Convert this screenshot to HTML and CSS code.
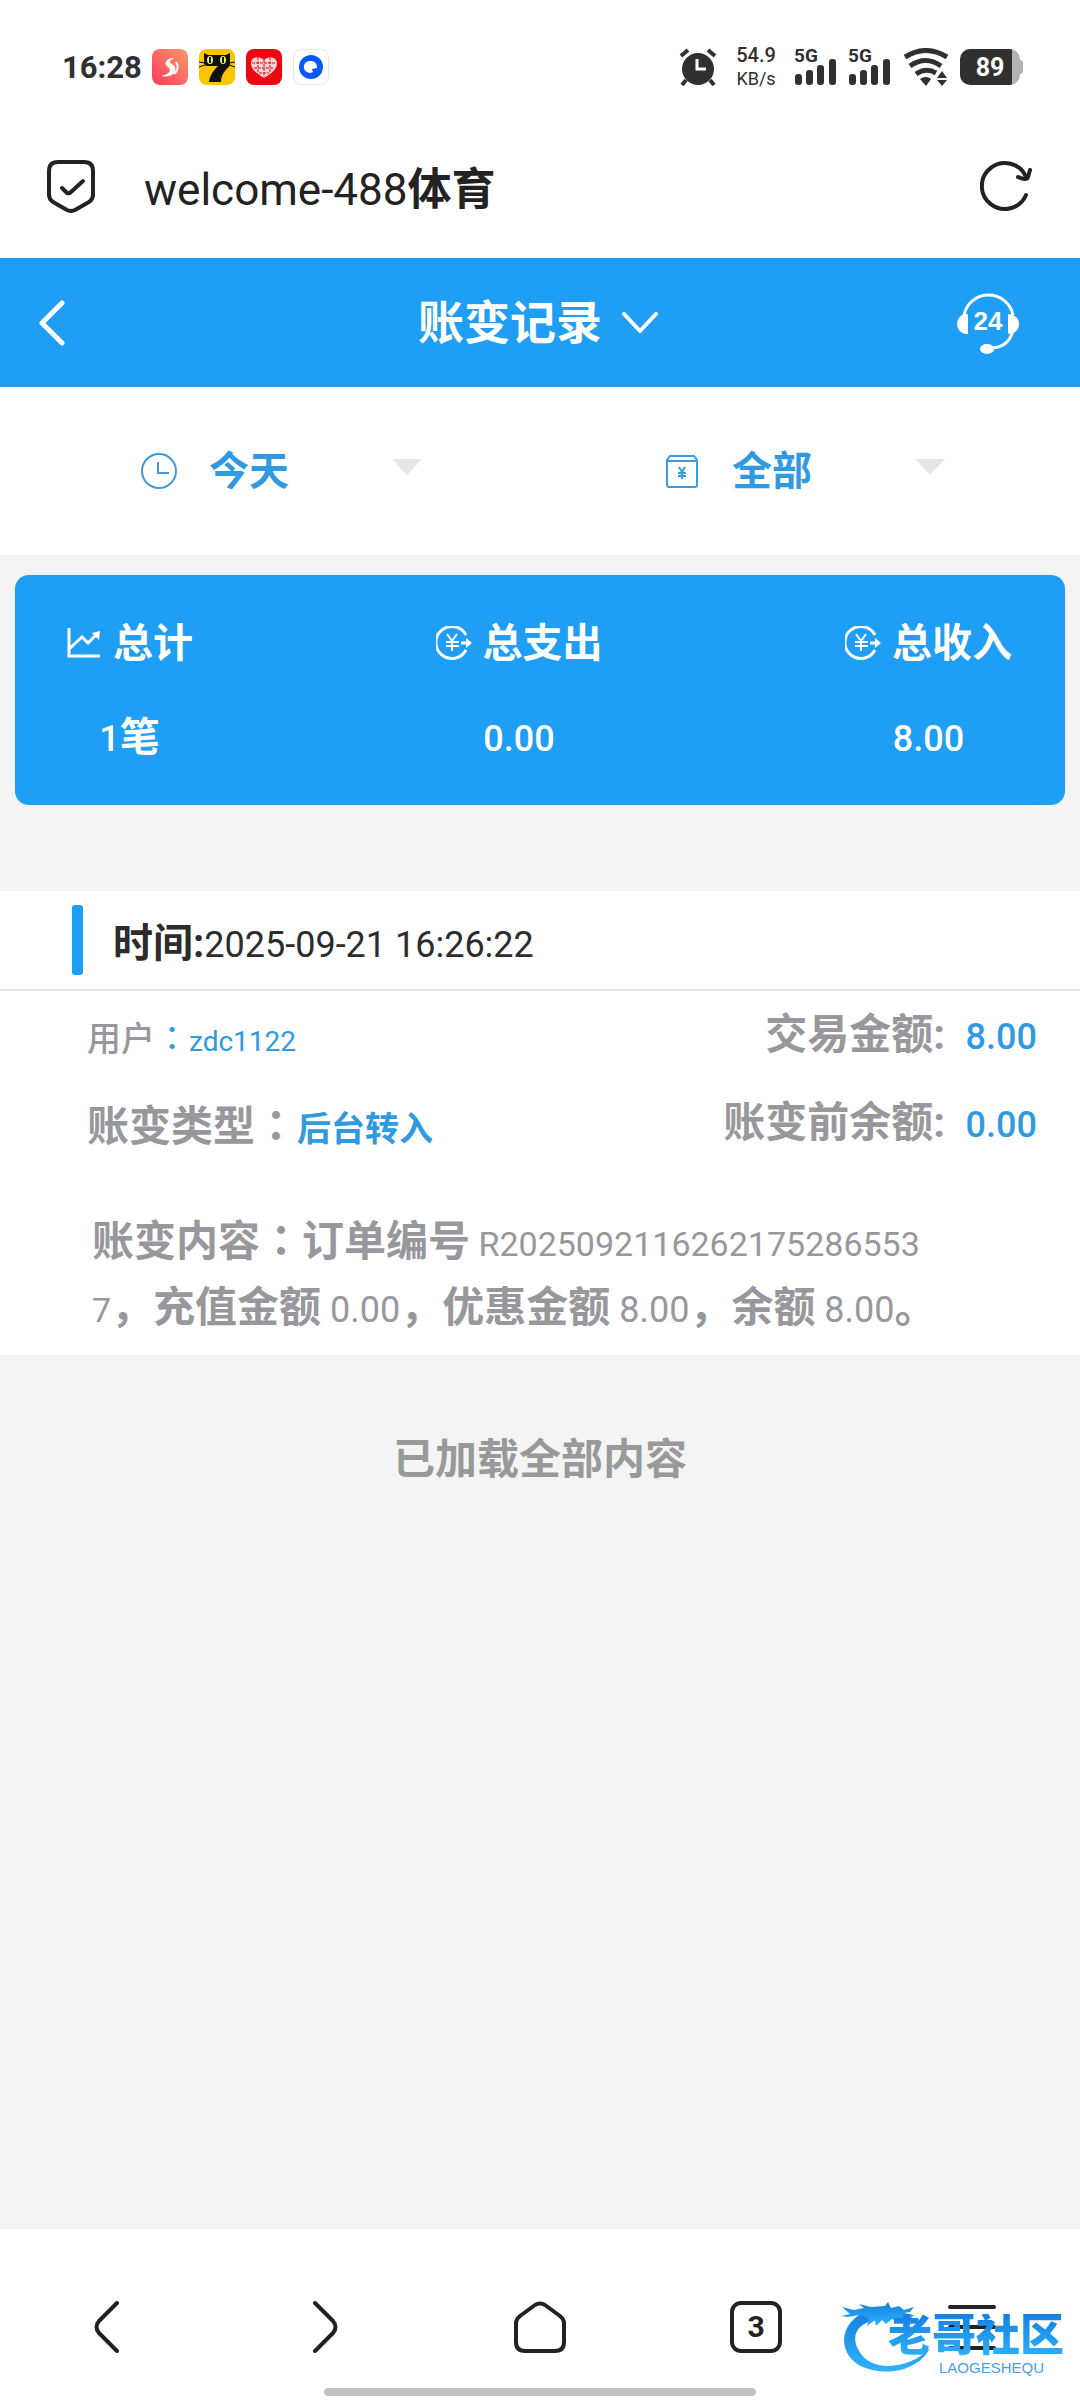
FILE: index.html
```html
<!doctype html>
<html lang="zh-CN">
  <head>
    <meta charset="UTF-8" />
    <meta name="viewport" content="width=device-width, initial-scale=1.0" />
    <title>账变记录</title>
    <link rel="stylesheet" href="styles.css" />
  </head>
  <body>
    <div class="status-bar">
      <div class="status-left">
        <span class="clock">16:28</span>
        <svg class="app-icon" viewBox="0 0 36 36">
          <defs>
            <linearGradient id="appRed" x1="1" y1="0" x2="0" y2="1">
              <stop offset="0" stop-color="#fb9a6a" />
              <stop offset="1" stop-color="#fb3a5c" />
            </linearGradient>
          </defs>
          <rect width="36" height="36" rx="8" fill="url(#appRed)" />
          <path d="M22 9c-8 0-11 6-6 9 4 3 2 7-7 9 10 2 16-3 14-9-1-3-5-3-5-5s2-3 4-4z" fill="#fff" />
          <path d="M24 13c3 4 2 9-2 12" fill="none" stroke="#fff" stroke-width="2" />
        </svg>
        <svg class="app-icon" viewBox="0 0 36 36">
          <rect width="36" height="36" rx="8" fill="#fdc400" />
          <path d="M5 4l4 2h18l4-2v10c0 4-3 5-5 8-3 4-4 7-4 11H10c1-7 4-11 9-16H9c-3 0-4-2-4-5z" fill="#111" />
          <ellipse cx="11" cy="11" rx="3" ry="4" fill="#e8f36a" />
          <ellipse cx="24" cy="11" rx="3" ry="4" fill="#e8f36a" />
          <path d="M11 8v6M24 8v6" stroke="#111" stroke-width="2" />
          <path d="M0 13l6 1M0 18l6-2M36 13l-6 1M36 18l-6-2" stroke="#111" />
        </svg>
        <svg class="app-icon" viewBox="0 0 36 36">
          <rect width="36" height="36" rx="8" fill="#ea0710" />
          <path d="M18 29C10 24 5 20 5 14c0-6 8-8 13-3 5-5 13-3 13 3 0 6-5 10-13 15z" fill="#fbd5d5" />
          <path d="M6 14h24M8 19h20M13 24h10M12 8v15M18 11v17M24 8v15" stroke="#ea0710" stroke-dasharray="3 1" />
        </svg>
        <svg class="app-icon" viewBox="0 0 36 36">
          <rect x=".5" y=".5" width="35" height="35" rx="8" fill="#fff" stroke="#e6e6e6" />
          <circle cx="18" cy="18" r="12" fill="#0b57f7" />
          <path d="M18 12a6 6 0 1 0 2 11l-1-3 5-1a6 6 0 0 0-6-7z" fill="#fff" />
        </svg>
      </div>
      <div class="status-right">
        <svg class="alarm" viewBox="0 0 38 38" fill="none" stroke="#303030" stroke-width="4">
          <circle cx="19" cy="21" r="16" fill="#303030" stroke="none" />
          <path d="M2 8l7-6M36 8l-7-6M7 32l-4 5M31 32l4 5" />
          <path d="M18 11v10h9" stroke="#fff" stroke-width="3" />
        </svg>
        <div class="speed"><b>54.9</b><span>KB/s</span></div>
        <div class="signal">
          <b>5G</b>
          <svg viewBox="0 0 42 26" fill="#303030">
            <rect y="15" width="7" height="11" rx="3" />
            <rect x="11" y="11" width="7" height="15" rx="3" />
            <rect x="22" y="6" width="7" height="20" rx="3" />
            <rect x="34" width="7" height="26" rx="3" />
          </svg>
        </div>
        <div class="signal">
          <b>5G</b>
          <svg viewBox="0 0 42 26" fill="#303030">
            <rect y="15" width="7" height="11" rx="3" />
            <rect x="11" y="11" width="7" height="15" rx="3" />
            <rect x="22" y="6" width="7" height="20" rx="3" />
            <rect x="34" width="7" height="26" rx="3" />
          </svg>
        </div>
        <svg class="wifi" viewBox="0 0 46 38" fill="none" stroke="#303030" stroke-width="5">
          <path d="M2 9q21-13 42 0M7 18q16-11 31 0M13 26q10-7 20-1" />
          <path d="M17 31q6-4 11 0l-5 7z" fill="#303030" stroke="none" />
          <path d="M39 23l5 7H34zM39 38l5-6H34z" fill="#303030" stroke="none" />
        </svg>
        <div class="battery"><span>89</span></div>
      </div>
    </div>

    <div class="address-bar">
      <svg class="shield" viewBox="0 0 50 54" fill="none" stroke="#222" stroke-width="4" stroke-linecap="round" stroke-linejoin="round">
        <path d="M12 3h26q9 0 9 9v24q0 4-4 7L29 51q-4 2-8 0L7 43q-4-3-4-7V12q0-9 9-9z" />
        <path d="M16 29l5 5q2 1 4-1l12-11" />
      </svg>
      <span class="site-title">welcome-488<b>体育</b></span>
      <button type="button" aria-label="刷新">
        <svg class="reload" viewBox="0 0 52 52" fill="none" stroke="#222" stroke-width="4" stroke-linecap="round" stroke-linejoin="round">
          <path d="M46 35A23 23 0 1 1 46 17" />
          <path d="M38 17q9 4 10 0l2-7" />
        </svg>
      </button>
    </div>

    <header class="page-header">
      <a href="#" class="back" aria-label="返回">
        <svg viewBox="0 0 26 46" fill="none" stroke="#fff" stroke-width="5" stroke-linecap="round" stroke-linejoin="round">
          <path d="M23 3L3 23l20 20" />
        </svg>
      </a>
      <button type="button" class="page-title">
        账变记录
        <svg viewBox="0 0 36 22" fill="none" stroke="#fff" stroke-width="4" stroke-linecap="round" stroke-linejoin="round">
          <path d="M2 2l16 17L34 2" />
        </svg>
      </button>
      <a href="#" class="service" aria-label="客服">
        <svg viewBox="0 0 62 62">
          <path d="M7 23a25 25 0 0 1 49 0M56 38q-4 18-23 18" fill="none" stroke="#fff" stroke-width="3" />
          <path d="M11 22v20C-4 42-3 21 11 22zM51 22v20q11-1 11-10t-11-10z" fill="#fff" />
          <ellipse cx="30" cy="57" rx="7" ry="5" fill="#fff" />
          <text x="31" y="38" text-anchor="middle">24</text>
        </svg>
      </a>
    </header>

    <form class="filters">
      <div class="filter">
        <label for="dateRange" aria-label="时间">
          <svg viewBox="0 0 36 36" fill="none" stroke="#3b9bdc" stroke-width="2">
            <circle cx="18" cy="18" r="17" />
            <path d="M17 9v11h11" />
          </svg>
        </label>
        <select id="dateRange">
          <option>今天</option>
          <option>昨天</option>
        </select>
        <span class="arrow"></span>
      </div>
      <div class="filter">
        <label for="recordType" aria-label="类型">
          <svg viewBox="0 0 36 36" fill="none" stroke="#3b9bdc" stroke-width="2">
            <path d="M3 7v25q0 2 2 2h26q2 0 2-2V7l-3-4H6zM3 8h30" />
            <path d="M15 14l3 5 3-5M14 20h8M14 23h8M18 19v7" />
          </svg>
        </label>
        <select id="recordType">
          <option>全部</option>
          <option>后台转入</option>
        </select>
        <span class="arrow"></span>
      </div>
    </form>

    <main>
      <section class="summary">
        <div class="summary-item">
          <h2>
            <svg viewBox="0 0 36 36" fill="none" stroke="#fff" stroke-width="3">
              <path d="M3 2v28h31M3 23l13-12 6 6L32 7" />
              <path d="M26 7l8-2-1 9z" fill="#fff" stroke="none" />
            </svg>
            总计
          </h2>
          <p><span class="num">1</span>笔</p>
        </div>
        <div class="summary-item">
          <h2>
            <svg viewBox="0 0 36 36" fill="none" stroke="#fff" stroke-width="2">
              <path d="M30 9a16 16 0 1 0 0 15" stroke-width="3" />
              <path d="M11 8l5 7 5-7M10 16h13M10 20h13M16 15v10" />
              <path d="M25 17h6" stroke-width="3" />
              <path d="M30 12l6 5-6 5z" fill="#fff" stroke="none" />
            </svg>
            总支出
          </h2>
          <p><span class="num">0.00</span></p>
        </div>
        <div class="summary-item">
          <h2>
            <svg viewBox="0 0 36 36" fill="none" stroke="#fff" stroke-width="2">
              <path d="M30 9a16 16 0 1 0 0 15" stroke-width="3" />
              <path d="M11 8l5 7 5-7M10 16h13M10 20h13M16 15v10" />
              <path d="M25 17h6" stroke-width="3" />
              <path d="M30 12l6 5-6 5z" fill="#fff" stroke="none" />
            </svg>
            总收入
          </h2>
          <p><span class="num">8.00</span></p>
        </div>
      </section>

      <article class="record">
        <h3><span>时间:<span class="num">2025-09-21 16:26:22</span></span></h3>
        <div class="record-info">
          <div class="account">
            <p class="user">用户<span class="value"><span class="colon" lang="zh-Hant">：</span>zdc1122</span></p>
            <p>账变类型<span class="colon" lang="zh-Hant">：</span><span class="value type">后台转入</span></p>
          </div>
          <div class="amounts">
            <p>交易金额: <span class="value num">8.00</span></p>
            <p>账变前余额: <span class="value num">0.00</span></p>
          </div>
        </div>
        <p class="detail">账变内容<span class="colon" lang="zh-Hant">：</span>订单编号<span class="order"> R2025092116262175286553<wbr>7</span>，充值金额<span class="num"> 0.00</span>，优惠金额<span class="num"> 8.00</span>，余额<span class="num"> 8.00</span>。</p>
      </article>

      <p class="load-end">已加载全部内容</p>
    </main>

    <nav class="browser-nav">
      <div class="nav-buttons">
        <button type="button" aria-label="后退">
          <svg viewBox="0 0 52 52"><path d="M35 2L17 20q-5 6 0 12l18 18" /></svg>
        </button>
        <button type="button" aria-label="前进">
          <svg viewBox="0 0 52 52"><path d="M17 2l18 18q5 6 0 12L17 50" /></svg>
        </button>
        <button type="button" aria-label="主页">
          <svg viewBox="0 0 52 52"><path d="M21 4q5-3 10 0l15 11q4 3 4 7v19q0 9-9 9H11q-9 0-9-9V22q0-4 4-7z" /></svg>
        </button>
        <button type="button" aria-label="标签页"><span class="tab-count">3</span></button>
        <button type="button" aria-label="菜单">
          <svg viewBox="0 0 52 52"><path d="M4 6h44M4 26h44M4 47h44" /></svg>
        </button>
      </div>
      <div class="home-bar"></div>
      <div class="watermark">
        <svg viewBox="0 0 94 76">
          <defs>
            <linearGradient id="dragon" x1="0" y1="0" x2="0" y2="1">
              <stop offset="0" stop-color="#1580df" />
              <stop offset="1" stop-color="#2fb2fb" />
            </linearGradient>
          </defs>
          <g fill="url(#dragon)">
            <path d="M28 13C6 20-2 42 9 58c15 22 66 22 81-8-18 20-56 25-69 6C9 40 16 24 38 22z" />
            <path d="M2 9l12 3 10-2-5-4 12 3 14-1 3-4 3 6 8-2 5 4 10-3-4 5-6 1 10 2-4 4-9-1 8 5-11-1-6-3-6 5-4-4-6 6-1-6-8 6 2-8-9-3-12 2-7-1 9-2z" />
          </g>
        </svg>
        <span class="brand">老哥社区</span>
        <span class="brand-en">LAOGESHEQU</span>
      </div>
    </nav>
  </body>
</html>
```

FILE: styles.css
```css
* {
  box-sizing: border-box;
}
body {
  font-family: Roboto, "Noto Sans CJK SC", sans-serif;
  margin: 0;
  min-height: 100vh;
  display: flex;
  flex-direction: column;
  background-color: #f4f4f4;
  color: #2c2c2c;
}
h2,
h3,
p {
  margin: 0;
}
button {
  border: none;
  background: none;
  padding: 0;
  font: inherit;
  color: inherit;
  cursor: pointer;
}
svg {
  display: block;
  flex-shrink: 0;
}
.num {
  font-size: 36px;
  font-weight: 400;
  line-height: 1;
}
.colon {
  font-family: "Noto Sans CJK TC", sans-serif;
  line-height: 1;
}

/* phone status bar */
.status-bar {
  display: flex;
  justify-content: space-between;
  align-items: center;
  height: 134px;
  padding: 0 60px 0 62px;
  background: #fff;
  color: #303030;
}
.status-left,
.status-right {
  display: flex;
  align-items: center;
  gap: 11px;
}
.clock {
  width: 79px;
  font-size: 31px;
  font-weight: 700;
}
.app-icon {
  width: 36px;
  height: 36px;
}
.alarm {
  width: 38px;
  height: 38px;
  margin-right: 9px;
}
.speed {
  display: flex;
  flex-direction: column;
  align-items: center;
  width: 38px;
  margin-right: 9px;
  font-size: 18px;
  line-height: 24px;
}
.speed b {
  font-size: 20px;
  font-weight: 500;
}
.signal {
  position: relative;
  display: flex;
  align-items: flex-end;
  width: 43px;
  height: 36px;
}
.signal svg {
  width: 42px;
  height: 26px;
}
.signal b {
  position: absolute;
  top: -3px;
  left: -1px;
  font-size: 19px;
  line-height: 20px;
}
.wifi {
  width: 46px;
  height: 38px;
}
.battery {
  position: relative;
  display: flex;
  align-items: center;
  justify-content: center;
  width: 60px;
  height: 36px;
  border-radius: 10px;
  background: linear-gradient(to right, #303030 52px, #b3b3b3 52px);
  color: #fff;
  font-size: 25px;
  font-weight: 700;
}
.battery::after {
  content: "";
  position: absolute;
  right: -3px;
  top: 11px;
  width: 4px;
  height: 14px;
  border-radius: 0 3px 3px 0;
  background: #b3b3b3;
}

/* browser address bar */
.address-bar {
  display: flex;
  align-items: center;
  height: 124px;
  padding: 0 48px 20px 46px;
  background: #fff;
  color: #222;
}
.shield {
  width: 50px;
  height: 54px;
}
.site-title {
  flex: 1;
  padding-left: 48px;
  font-size: 44px;
}
.reload {
  width: 52px;
  height: 52px;
}

.page-header {
  display: flex;
  justify-content: space-between;
  align-items: center;
  height: 129px;
  padding: 0 61px 0 39px;
  background: #1e9ef4;
  color: #fff;
}
.back {
  width: 80px;
}
.back svg {
  width: 26px;
  height: 46px;
}
.page-title {
  display: flex;
  align-items: center;
  gap: 20px;
  font-size: 46px;
  font-weight: 700;
  line-height: 62px;
}
.page-title svg {
  width: 36px;
  height: 22px;
}
.service svg {
  width: 62px;
  height: 62px;
}
.service text {
  font-family: "Liberation Sans", sans-serif;
  font-size: 26px;
  font-weight: 700;
  fill: #fff;
}

.filters {
  display: flex;
  height: 168px;
  padding: 0 14px 0 20px;
  background: #fff;
}
.filter {
  flex: 1;
  display: flex;
  align-items: center;
  justify-content: center;
}
.filter svg {
  width: 36px;
  height: 36px;
}
.filter select {
  width: 183px;
  margin-left: 32px;
  padding: 0;
  appearance: none;
  border: none;
  background: none;
  color: #2f9ae0;
  font: inherit;
  font-size: 40px;
  font-weight: 700;
}
.arrow {
  border: 15px solid transparent;
  border-top: 16px solid #e6e6e6;
  border-bottom: none;
  margin-bottom: 8px;
}

main {
  flex: 1;
  padding-top: 20px;
}
.summary {
  display: flex;
  justify-content: space-between;
  height: 230px;
  margin: 0 15px 86px;
  padding: 38px 53px 0 51px;
  border-radius: 14px;
  background: #1e9ef4;
  color: #fff;
  text-align: center;
}
.summary-item h2 {
  display: flex;
  align-items: center;
  gap: 11px;
  font-size: 40px;
  line-height: 62px;
}
.summary-item svg {
  width: 36px;
  height: 36px;
}
.summary-item p {
  margin-top: 32px;
  font-size: 40px;
  font-weight: 700;
  line-height: 62px;
}
.summary-item .num {
  font-weight: 500;
}

.record {
  background: #fff;
  padding-bottom: 14px;
}
.record h3 {
  display: flex;
  align-items: center;
  height: 100px;
  padding-left: 72px;
  border-bottom: 2px solid #e6e6e6;
  font-size: 40px;
}
.record h3::before {
  content: "";
  width: 11px;
  height: 70px;
  margin-right: 30px;
  border-radius: 3px;
  background: #1e9ef4;
}
.record-info {
  display: flex;
  justify-content: space-between;
  padding: 0 43px 0 87px;
  color: #98989c;
  font-size: 42px;
  font-weight: 700;
  line-height: 88px;
}
.record-info p {
  height: 88px;
}
.account {
  padding-top: 4px;
}
.value {
  color: #2f9ae0;
}
.record-info .user {
  font-size: 34px;
  font-weight: 500;
}
.user .value {
  font-size: 28px;
  font-weight: 400;
}
.user .colon {
  font-size: 34px;
}
.type {
  font-size: 34px;
}
.amounts {
  text-align: right;
}
.amounts .num {
  margin-left: 10px;
  font-weight: 500;
}
.detail {
  margin-top: 38px;
  padding: 0 136px 0 92px;
  color: #98989c;
  font-size: 42px;
  font-weight: 700;
  line-height: 66px;
}
.order {
  font-size: 34px;
  font-weight: 400;
  line-height: 1;
}
.load-end {
  padding-top: 74px;
  color: #989a99;
  font-size: 42px;
  font-weight: 700;
  line-height: 62px;
  text-align: center;
}

/* browser toolbar */
.browser-nav {
  position: relative;
  padding: 72px 0 4px;
  background: #fff;
}
.nav-buttons {
  display: flex;
}
.nav-buttons button {
  flex: 1;
  display: flex;
  justify-content: center;
}
.nav-buttons svg {
  width: 52px;
  height: 52px;
  fill: none;
  stroke: #222;
  stroke-width: 4;
  stroke-linecap: round;
  stroke-linejoin: round;
}
.tab-count {
  width: 52px;
  height: 52px;
  border: 4px solid #222;
  border-radius: 11px;
  color: #222;
  font-size: 30px;
  font-weight: 700;
  line-height: 44px;
}
.home-bar {
  width: 40%;
  height: 8px;
  margin: 35px auto 0;
  border-radius: 4px;
  background: #c2c2c2;
}
.watermark {
  position: absolute;
  right: 16px;
  bottom: 26px;
  width: 224px;
  height: 76px;
}
.watermark svg {
  width: 94px;
  height: 76px;
}
.brand {
  position: absolute;
  right: 0;
  top: 16px;
  background: linear-gradient(#1580df, #2fb2fb);
  background-clip: text;
  color: transparent;
  font-size: 44px;
  font-weight: 900;
  line-height: 44px;
}
.brand-en {
  position: absolute;
  right: 20px;
  top: 62px;
  color: #4a9fe6;
  font-family: "Liberation Sans", sans-serif;
  font-size: 15px;
  line-height: 15px;
}
```
